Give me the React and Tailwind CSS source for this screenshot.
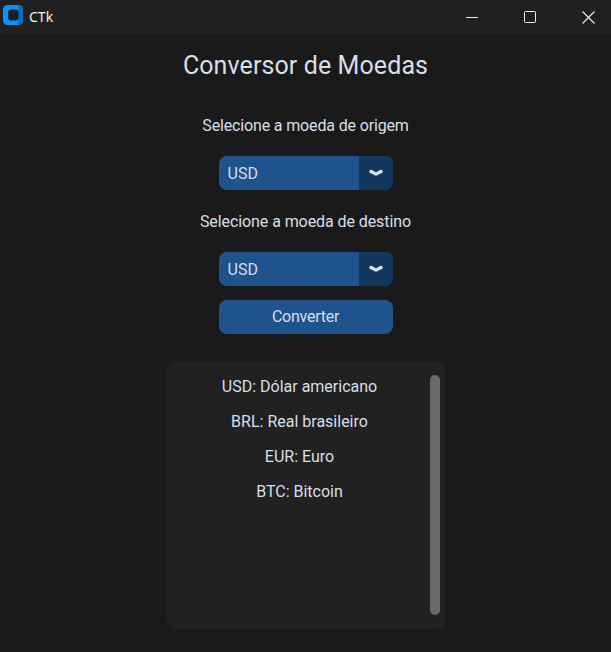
import React from "react";

const Select = () => (
    <div className="flex h-[34px] w-[174px] overflow-hidden rounded-[8px] bg-[#1f538d]">
        <div className="flex flex-1 items-center pt-px pl-[9px] text-[16px]">USD</div>
        <div className="flex w-[34px] items-center justify-center bg-[#14375e]">
            <svg width="14" height="8" viewBox="0 0 14 8" fill="none">
                <path d="M2 2.500 L7 5.200 L12 2.500" stroke="#dce4ee" strokeWidth="3.200" strokeLinecap="round" strokeLinejoin="round" />
            </svg>
        </div>
    </div>
);

const currencies = ["USD: Dólar americano", "BRL: Real brasileiro", "EUR: Euro", "BTC: Bitcoin"];

export default function App() {
    return (
        <div className="flex h-[652px] w-[611px] flex-col overflow-hidden bg-[#1a1a1a] font-['Roboto',sans-serif] text-[#d8dfe8]">
            {/* Title bar */}
            <div className="flex h-[34px] shrink-0 items-center justify-between bg-[#202020]">
                <div className="flex items-center">
                    <svg className="mb-[4px] ml-[3px]" width="20" height="20" viewBox="0 0 20 20">
                        <rect width="20" height="20" rx="4.5" fill="#0a93f5" />
                        <path d="M15 0h.5A4.5 4.5 0 0 1 20 4.500v11a4.500 4.500 0 0 1-4.500 4.500H15z" fill="#0b6fc0" />
                        <rect x="5" y="4.500" width="10.500" height="11" rx="3.500" fill="#16202a" />
                    </svg>
                    <span className="mb-[2px] ml-[6px] font-['Noto_Sans',sans-serif] text-[14px] text-[#f2f2f2]">CTk</span>
                </div>
                <div className="mr-[16px] flex items-center gap-[46px]">
                    <div className="h-px w-[12px] bg-[#f0f0f0]" />
                    <div className="h-[12px] w-[12px] rounded-[1.500px] border border-[#f0f0f0]" />
                    <svg width="13" height="13" viewBox="0 0 13 13" fill="none">
                        <path d="M.5.500l12 12M12.500.500l-12 12" stroke="#f0f0f0" strokeWidth="1.100" />
                    </svg>
                </div>
            </div>

            <div className="flex flex-col items-center">
                <h1 className="mt-[15px] h-[33px] text-[25px] leading-[33px] tracking-[0.1px]">Conversor de Moedas</h1>

                <p className="mt-[34px] h-[20px] text-[16px] leading-[20px] tracking-[-0.15px]">Selecione a moeda de origem</p>
                <div className="mt-[20px]"><Select /></div>

                <p className="mt-[22px] h-[20px] text-[16px] leading-[20px] tracking-[-0.08px]">Selecione a moeda de destino</p>
                <div className="mt-[20px]"><Select /></div>

                <button className="mt-[14px] h-[34px] w-[174px] rounded-[8px] bg-[#1f538d] text-[16px] tracking-[-0.25px]">Converter</button>

                {/* Lista de moedas */}
                <div className="relative mt-[27px] h-[268px] w-[278px] rounded-[8px] bg-[#212121]">
                    <div className="flex w-[266px] flex-col items-center pt-[16px] text-[16px]">
                        {currencies.map((c) => (
                            <div key={c} className="h-[35px] leading-[20px]">{c}</div>
                        ))}
                    </div>
                    <div className="absolute top-[14px] right-[5px] h-[240px] w-[10px] rounded-[5px] bg-[#696969]" />
                </div>
            </div>
        </div>
    );
}
